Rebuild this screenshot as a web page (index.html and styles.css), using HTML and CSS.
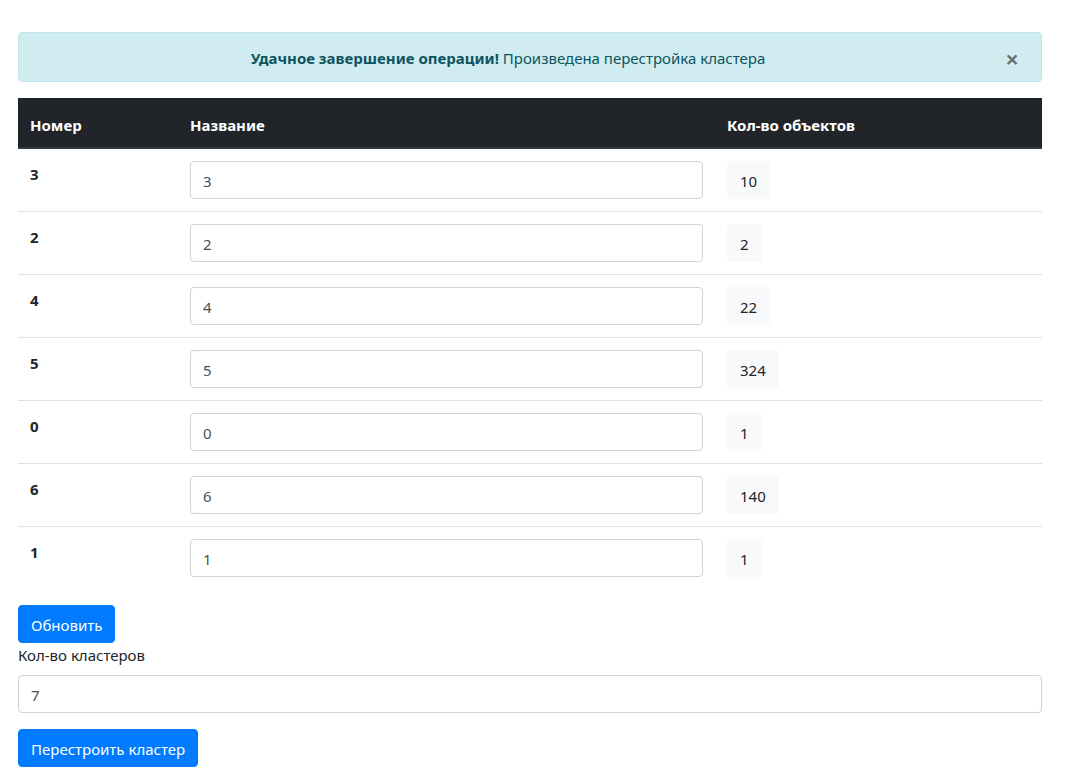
FILE: index.html
```html
<!DOCTYPE html>
<html lang="ru">
<head>
<meta charset="utf-8">
<title>Кластеры</title>
<link rel="stylesheet" href="styles.css">
</head>
<body>
<div class="page">
  <div class="alert">
    <strong>Удачное завершение операции!</strong> Произведена перестройка кластера
    <button class="close" type="button" aria-label="Close">&times;</button>
  </div>

  <table class="table">
    <thead>
      <tr>
        <th class="c-num">Номер</th>
        <th class="c-name">Название</th>
        <th class="c-count">Кол-во объектов</th>
      </tr>
    </thead>
    <tbody>
      <tr><th>3</th><td><input class="form-control" value="3"></td><td><span class="count">10</span></td></tr>
      <tr><th>2</th><td><input class="form-control" value="2"></td><td><span class="count">2</span></td></tr>
      <tr><th>4</th><td><input class="form-control" value="4"></td><td><span class="count">22</span></td></tr>
      <tr><th>5</th><td><input class="form-control" value="5"></td><td><span class="count">324</span></td></tr>
      <tr><th>0</th><td><input class="form-control" value="0"></td><td><span class="count">1</span></td></tr>
      <tr><th>6</th><td><input class="form-control" value="6"></td><td><span class="count">140</span></td></tr>
      <tr><th>1</th><td><input class="form-control" value="1"></td><td><span class="count">1</span></td></tr>
    </tbody>
  </table>

  <button class="btn" type="button">Обновить</button>

  <div class="form-group">
    <label class="label" for="k">Кол-во кластеров</label>
    <input id="k" class="form-control" value="7">
  </div>

  <button class="btn" type="button">Перестроить кластер</button>
</div>
</body>
</html>
```

FILE: styles.css
```css
* { box-sizing: border-box; }

html, body {
  margin: 0;
  padding: 0;
  background: #fff;
}

body {
  font-family: "Noto Sans", "Open Sans", sans-serif;
  font-size: 15px;
  line-height: 24px;
  color: #212529;
}

.page {
  padding: 32px 28px 0 18px;
}

.alert {
  position: relative;
  padding: 13px 64px 11px 20px;
  margin-bottom: 16px;
  border: 1px solid #bee5eb;
  border-radius: 4px;
  background: #d1ecf1;
  color: #0c5460;
  text-align: center;
}

.alert strong { font-weight: 700; }

.close {
  position: absolute;
  top: 0;
  right: 0;
  padding: 14px 22px 10px;
  border: 0;
  background: transparent;
  font-family: inherit;
  font-size: 24px;
  line-height: 24px;
  font-weight: 700;
  color: #000;
  opacity: .5;
  text-shadow: 0 1px 0 #fff;
  cursor: pointer;
}

.table {
  width: 100%;
  border-collapse: collapse;
  margin-bottom: 16px;
}

.table th,
.table td {
  padding: 12px;
  vertical-align: top;
  text-align: left;
  border-top: 1px solid #dee2e6;
}

.table tbody th {
  padding-top: 13px;
  padding-bottom: 11px;
}

.table thead th {
  padding: 15px 12px 10px;
  background: #212529;
  color: #fff;
  font-weight: 700;
  border-top: 0;
  border-bottom: 2px solid #32383e;
}

.table tbody tr:first-child th,
.table tbody tr:first-child td { border-top: 0; }

.c-num { width: 160px; }
.c-name { width: 537px; }

.form-control {
  display: block;
  width: 100%;
  height: 38px;
  padding: 7px 12px 5px;
  font-family: inherit;
  font-size: 15px;
  line-height: 24px;
  color: #495057;
  background: #fff;
  border: 1px solid #ced4da;
  border-radius: 4px;
}

.count {
  display: inline-block;
  padding: 7px 12px 5px;
  border: 1px solid transparent;
  border-radius: 4px;
  background: #f8f9fa;
  color: #212529;
  line-height: 24px;
}

.btn {
  display: inline-block;
  padding: 7px 12px 5px;
  border: 1px solid #007bff;
  border-radius: 4px;
  background: #007bff;
  color: #fff;
  font-family: inherit;
  font-size: 15px;
  line-height: 24px;
  vertical-align: top;
}

.form-group {
  margin-bottom: 16px;
}

.label {
  display: inline-block;
  margin-bottom: 8px;
  padding-top: 2px;
  margin-top: -2px;
}
```
